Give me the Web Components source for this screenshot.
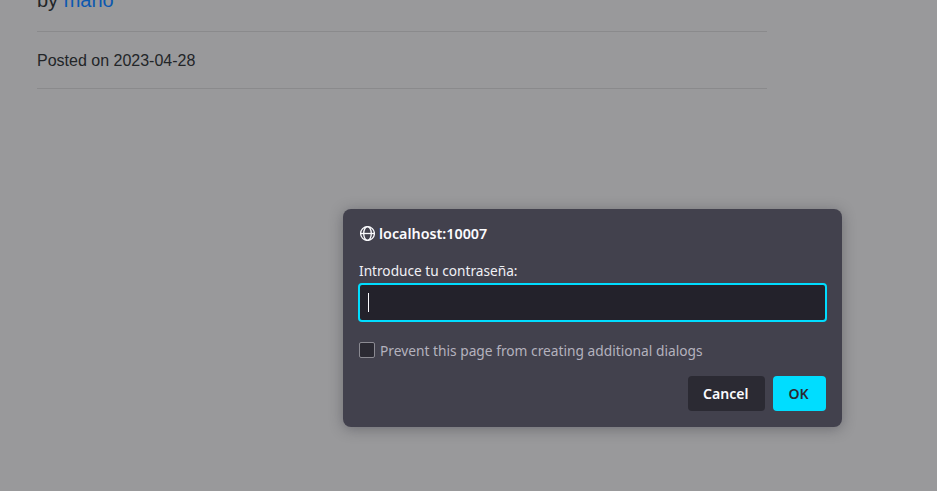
<!DOCTYPE html>
<html lang="es">
<head>
<meta charset="utf-8">
<title>Post</title>
<style>
html,body{margin:0;height:100%;overflow:hidden;background:#99999b}
body{font-family:"Liberation Sans",Arial,sans-serif;color:#222528}
</style>
</head>
<body>
<post-page></post-page>
<script>
const define = (name, html) => customElements.define(name, class extends HTMLElement {
  constructor() {
    super();
    this.attachShadow({ mode: 'open' }).innerHTML = html;
  }
});

define('post-meta', `
<style>
:host{display:block;width:730px;padding-left:37px;margin-top:-15px}
.lead{font-size:20px;line-height:30px;margin:0 0 16px}
a{color:#0c58b0;text-decoration:none}
hr{border:0;border-top:1px solid #8a8a8c;margin:0}
.date{font-size:16px;line-height:24px;margin:17px 0 15px}
</style>
<p class="lead">by <a>mario</a></p><hr>
<p class="date"><slot></slot></p><hr>`);

define('globe-icon', `
<style>:host{display:block;width:16px;height:16px}svg{display:block}</style>
<svg width="16" height="16" viewBox="0 0 16 16" fill="none" stroke="#fbfbfe" stroke-width="1.3">
<circle cx="8.5" cy="8.5" r="6.9"/><ellipse cx="8.5" cy="8.5" rx="3.8" ry="6.9"/><path d="M1.5 8.5h14"/></svg>`);

define('text-field', `
<style>
:host{display:flex;align-items:center;box-sizing:border-box;height:39px;border:2px solid #00ddff;border-radius:4px;background:#23222b;padding-left:8px}
i{display:block;width:1px;height:19px;background:#fbfbfe}
</style><i></i>`);

define('check-option', `
<style>
:host{display:flex;align-items:center;gap:5px;height:20px;color:#b4b2be}
i{box-sizing:border-box;width:16px;height:16px;border:1px solid #8b8a92;border-radius:2px;background:#2b2a33}
</style><i></i><slot></slot>`);

define('push-button', `
<style>
:host{display:flex;align-items:center;justify-content:center;box-sizing:border-box;padding:0 1px 2px 0;width:77px;height:35px;border-radius:4px;background:#2b2a33;color:#fbfbfe;font-weight:600}
:host([primary]){width:53px;background:#00ddff;color:#2b2a33}
</style><slot></slot>`);

define('prompt-dialog', `
<style>
:host{position:absolute;left:343px;top:209px;box-sizing:border-box;width:499px;height:218px;padding:14px 15px 0;border-radius:8px;background:#42414d;color:#fbfbfe;box-shadow:0 2px 14px rgba(40,40,50,.38);font:14.67px/20px "Noto Sans",sans-serif}
header{display:flex;align-items:center;gap:4px;height:20px;padding-left:1px;font-weight:600}
span{display:inline-block;white-space:nowrap;transform-origin:0 50%}
.origin{transform:scaleX(.977)}
.label{height:20px;margin:17px 0 3px;padding-left:.5px;color:#f0f0f5}
.label span{transform:scaleX(.932)}
check-option{margin:18px 0 16px;padding-left:1px}
check-option span{transform:scaleX(.9385)}
footer{display:flex;justify-content:flex-end;gap:8px;padding-right:1px}
footer span{transform:scaleX(.96);transform-origin:center}
</style>
<header><globe-icon></globe-icon><span class="origin">localhost:10007</span></header>
<div class="label"><span>Introduce tu contraseña:</span></div>
<text-field></text-field>
<check-option><span>Prevent this page from creating additional dialogs</span></check-option>
<footer><push-button><span>Cancel</span></push-button><push-button primary><span>OK</span></push-button></footer>`);

define('post-page', `
<style>:host{display:flow-root;position:relative;width:937px;height:491px;overflow:hidden}</style>
<post-meta>Posted on 2023-04-28</post-meta>
<prompt-dialog></prompt-dialog>`);
</script>
</body>
</html>
